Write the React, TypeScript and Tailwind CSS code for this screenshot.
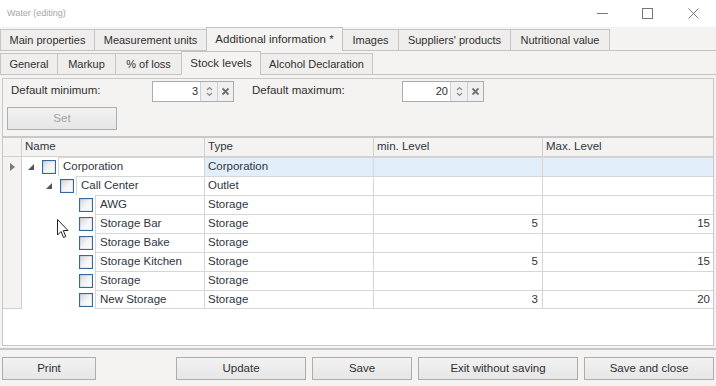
import React from 'react';

const font = { fontFamily: '"Liberation Sans", Arial, sans-serif' };

const topTabs = [
  { label: 'Main properties', w: 'w-[95px]' },
  { label: 'Measurement units', w: 'w-[113px]' },
  { label: 'Additional information *', w: 'w-[137px]', active: true },
  { label: 'Images', w: 'w-[57px]' },
  { label: "Suppliers' products", w: 'w-[113px]' },
  { label: 'Nutritional value', w: 'w-[100px]' },
];

const subTabs = [
  { label: 'General', w: 'w-[58px]' },
  { label: 'Markup', w: 'w-[59px]' },
  { label: '% of loss', w: 'w-[67px]' },
  { label: 'Stock levels', w: 'w-[80px]', active: true },
  { label: 'Alcohol Declaration', w: 'w-[113px]' },
];

type Row = { name: string; level: number; type: string; min?: string; max?: string; expand?: boolean; current?: boolean };

const rows: Row[] = [
  { name: 'Corporation', level: 0, type: 'Corporation', expand: true, current: true },
  { name: 'Call Center', level: 1, type: 'Outlet', expand: true },
  { name: 'AWG', level: 2, type: 'Storage' },
  { name: 'Storage Bar', level: 2, type: 'Storage', min: '5', max: '15' },
  { name: 'Storage Bake', level: 2, type: 'Storage' },
  { name: 'Storage Kitchen', level: 2, type: 'Storage', min: '5', max: '15' },
  { name: 'Storage', level: 2, type: 'Storage' },
  { name: 'New Storage', level: 2, type: 'Storage', min: '3', max: '20' },
];

function Tab({ label, w, active }: { label: string; w: string; active?: boolean }) {
  return (
    <div
      className={
        active
          ? `${w} -ml-px h-[24px] -mb-px border border-b-0 border-[#c3c3c3] bg-[#f4f3f1] flex items-center justify-center text-[11.5px] text-[#303030] z-10`
          : `${w} -ml-px first:ml-0 h-[21px] border border-b-0 border-[#c6c6c6] bg-[#efeeec] flex items-center justify-center text-[11px] text-[#303030]`
      }
    >
      {label}
    </div>
  );
}

function SpinEdit({ value }: { value: string }) {
  return (
    <div className="w-[82px] h-[21px] border border-[#acacac] bg-white flex">
      <div className="flex-1 flex items-center justify-end pr-[2px] text-[11px] text-[#303030]">{value}</div>
      <div className="w-[17px] border-l border-[#cfcfcf] bg-[#f0f0f0] flex flex-col items-center justify-center gap-[1px]">
        <svg width="7" height="5" viewBox="0 0 7 5"><path d="M1 4 L3.5 1.5 L6 4" fill="none" stroke="#8a8a8a" strokeWidth="1.2" /></svg>
        <svg width="7" height="5" viewBox="0 0 7 5"><path d="M1 1 L3.5 3.5 L6 1" fill="none" stroke="#8a8a8a" strokeWidth="1.2" /></svg>
      </div>
      <div className="w-[16px] border-l border-[#cfcfcf] bg-[#f0f0f0] flex items-center justify-center">
        <svg width="9" height="9" viewBox="0 0 9 9"><path d="M1.5 1.5 L7.5 7.5 M7.5 1.5 L1.5 7.5" stroke="#707070" strokeWidth="1.8" /></svg>
      </div>
    </div>
  );
}

function Check() {
  return (
    <svg className="ml-[2px]" width="14" height="14" viewBox="0 0 14 14">
      <defs>
        <linearGradient id="cbg" x1="0" y1="0" x2="1" y2="1">
          <stop offset="0" stopColor="#d2d2d2" />
          <stop offset="0.5" stopColor="#f4f4f4" />
          <stop offset="1" stopColor="#ffffff" />
        </linearGradient>
      </defs>
      <rect x="0.5" y="0.5" width="13" height="13" fill="url(#cbg)" stroke="#3566a6" strokeWidth="1.2" />
    </svg>
  );
}

function Btn({ label, w, disabled }: { label: string; w: string; disabled?: boolean }) {
  return (
    <div
      className={`${w} shrink-0 h-[23px] border border-[#adadad] bg-gradient-to-b from-[#f2f2f2] to-[#e6e6e6] flex items-center justify-center text-[11.5px] ${disabled ? 'text-[#a3a3a3]' : 'text-[#303030]'}`}
    >
      {label}
    </div>
  );
}

export default function App() {
  return (
    <div className="relative w-[716px] h-[386px] bg-[#f4f3f1] flex flex-col overflow-hidden" style={font}>
      {/* title bar */}
      <div className="h-[27px] bg-white flex items-center justify-between shrink-0">
        <span className="pl-[7px] text-[9px] text-[#a6a6a6]">Water (editing)</span>
        <div className="flex items-center h-full">
          <div className="w-[45px] flex justify-center">
            <svg width="11" height="11" viewBox="0 0 11 11"><path d="M0 5.5 H11" stroke="#777" strokeWidth="1" /></svg>
          </div>
          <div className="w-[45px] flex justify-center">
            <svg width="11" height="11" viewBox="0 0 11 11"><rect x="0.5" y="0.5" width="10" height="10" fill="none" stroke="#777" /></svg>
          </div>
          <div className="w-[46px] flex justify-center">
            <svg width="11" height="11" viewBox="0 0 11 11"><path d="M0.5 0.5 L10.5 10.5 M10.5 0.5 L0.5 10.5" stroke="#777" strokeWidth="1" /></svg>
          </div>
        </div>
      </div>

      {/* main tabs */}
      <div className="h-[24px] flex items-end border-b border-[#c3c3c3] shrink-0">
        {topTabs.map((t) => (
          <Tab key={t.label} {...t} />
        ))}
      </div>

      {/* sub tabs */}
      <div className="h-[24px] flex items-end border-b border-[#c3c3c3] shrink-0">
        {subTabs.map((t) => (
          <Tab key={t.label} {...t} />
        ))}
      </div>

      {/* page */}
      <div className="mt-[3px] mx-[2px] h-[268px] border border-[#c8c8c8] flex flex-col shrink-0">
        <div className="h-[57px] shrink-0 flex flex-col">
          <div className="h-[23px] pt-[1px] flex items-center text-[11.5px] text-[#303030]">
            <span className="pl-[8px] w-[149px]">Default minimum:</span>
            <SpinEdit value="3" />
            <span className="pl-[18px] w-[168px]">Default maximum:</span>
            <SpinEdit value="20" />
          </div>
          <div className="pt-[5px] pl-[4px]">
            <Btn label="Set" w="w-[110px]" disabled />
          </div>
        </div>
        <div className="h-[2px] bg-[#c8c8c8] shrink-0" />

        {/* grid */}
        <div className="flex-1 bg-white text-[11.5px] text-[#2f3540]">
          <div className="h-[19px] flex bg-[#f4f3f1] border-b border-[#d0d0d0]">
            <div className="w-[19px] border-r border-[#d0d0d0]" />
            <div className="w-[183px] border-r border-[#d0d0d0] pl-[3px] flex items-center">Name</div>
            <div className="w-[169px] border-r border-[#d0d0d0] pl-[3px] flex items-center">Type</div>
            <div className="w-[169px] border-r border-[#d0d0d0] pl-[3px] flex items-center">min. Level</div>
            <div className="flex-1 pl-[3px] flex items-center">Max. Level</div>
          </div>
          {rows.map((r, i) => {
            const last = i === rows.length - 1;
            const cell = `border-t ${last ? 'border-b' : ''} border-[#d6d6d6]`;
            const bg = r.current ? 'bg-[#e2eefa]' : '';
            return (
              <div key={r.name} className="h-[19px] flex">
                <div className={`w-[19px] bg-[#f4f3f1] border-r border-[#d0d0d0] flex items-center justify-center ${last ? 'border-b' : ''}`}>
                  {r.current && (
                    <svg width="5" height="8" viewBox="0 0 5 8"><path d="M0 0 L5 4 L0 8 Z" fill="#7a7a7a" /></svg>
                  )}
                </div>
                <div className="w-[183px] flex">
                  <div className={r.level === 0 ? 'w-0' : r.level === 1 ? 'w-[18px]' : 'w-[37px]'} />
                  <div className="w-[18px] flex items-center justify-center">
                    {r.expand && (
                      <svg width="6" height="6" viewBox="0 0 6 6"><path d="M6 0 L6 6 L0 6 Z" fill="#555" /></svg>
                    )}
                  </div>
                  <div className="w-[18px] flex items-center">
                    <Check />
                  </div>
                  <div className={`flex-1 border-l border-r border-[#d6d6d6] pl-[4px] flex items-center ${cell}`}>{r.name}</div>
                </div>
                <div className={`w-[169px] border-r border-[#d6d6d6] pl-[3px] flex items-center ${cell} ${bg}`}>{r.type}</div>
                <div className={`w-[169px] border-r border-[#d6d6d6] pr-[4px] flex items-center justify-end ${cell} ${bg}`}>{r.min}</div>
                <div className={`flex-1 pr-[3px] flex items-center justify-end ${cell} ${bg}`}>{r.max}</div>
              </div>
            );
          })}
        </div>
      </div>

      <div className="mt-[2px] h-[2px] bg-[#c8c8c8] shrink-0" />

      {/* bottom buttons */}
      <div className="pt-[7px] px-[2px] flex">
        <Btn label="Print" w="w-[94px]" />
        <div className="ml-[80px] flex gap-[6px]">
          <Btn label="Update" w="w-[130px]" />
          <Btn label="Save" w="w-[100px]" />
          <Btn label="Exit without saving" w="w-[160px]" />
          <Btn label="Save and close" w="w-[130px]" />
        </div>
      </div>

      {/* mouse pointer */}
      <svg className="absolute left-[57px] top-[219px]" width="12" height="20" viewBox="0 0 12 20">
        <path d="M0.5 0.5 L0.5 16 L4 12.5 L6.5 18.5 L8.8 17.5 L6.3 11.5 L11 11.5 Z" fill="white" stroke="#222" strokeWidth="1" strokeLinejoin="round" />
      </svg>
    </div>
  );
}
